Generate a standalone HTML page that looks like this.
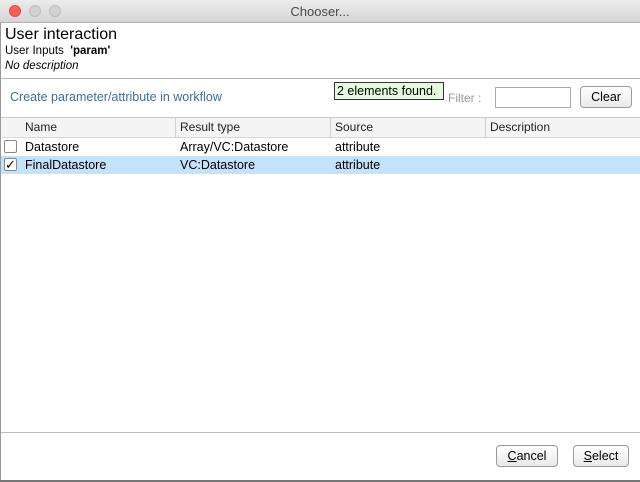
<!DOCTYPE html>
<html><head><style>
*{margin:0;padding:0;box-sizing:border-box}
body{width:640px;height:482px;background:#fff;font-family:"Liberation Sans",sans-serif;font-size:12px;color:#000;position:relative;overflow:hidden}
.abs{position:absolute}
.title{left:0;top:0;width:640px;height:23px;background:linear-gradient(#ececec,#d5d5d5);border-bottom:1px solid #b0b0b0;text-align:center;font-size:13px;line-height:23px;color:#4a4a4a}
.dot{top:5px;width:12px;height:12px;border-radius:50%}
.btn{background:linear-gradient(#fff,#e9e9e9);border:1px solid #9a9a9a;border-radius:4px;text-align:center;font-size:12.5px;line-height:20px}
.hd{top:117px;height:21px;background:#f4f4f4;border-top:1px solid #c8c8c8;border-bottom:1px solid #d8d8d8;line-height:19px;font-size:12px;color:#222;padding-left:4px;border-right:1px solid #d0d0d0}
.cell{height:18px;line-height:18px;font-size:12.5px}
.cb{left:4px;width:13px;height:13px;border:1px solid #888;border-radius:2px;background:#fff}
</style></head><body>
<div class="abs title">Chooser...</div>
<div class="abs dot" style="left:9px;background:#fc5f57;border:1px solid #de4a42"></div>
<div class="abs dot" style="left:29px;background:#d2d2d2;border:1px solid #bcbcbc"></div>
<div class="abs dot" style="left:49px;background:#d2d2d2;border:1px solid #bcbcbc"></div>
<div class="abs" style="left:0;top:23px;width:1px;height:459px;background:#999"></div>
<div class="abs" style="left:5px;top:26px;font-size:16px">User interaction</div>
<div class="abs" style="left:5px;top:45px;font-size:11.5px">User Inputs &nbsp;<b>'param'</b></div>
<div class="abs" style="left:5px;top:60px;font-size:11.5px;font-style:italic">No description</div>
<div class="abs" style="left:1px;top:78px;width:639px;height:1px;background:#b5b5b5"></div>
<div class="abs" style="left:10px;top:90px;color:#3b6fa0;font-size:12.5px">Create parameter/attribute in workflow</div>
<div class="abs" style="left:334px;top:82px;width:110px;height:18px;background:#e4fbe0;border:1px solid #333;font-size:12.5px;line-height:16px;padding-left:2px;white-space:nowrap">2 elements found.</div>
<div class="abs" style="left:448px;top:91px;color:#999;font-size:12px">Filter :</div>
<div class="abs" style="left:495px;top:87px;width:76px;height:21px;border:1px solid #aaa;background:#fff"></div>
<div class="abs btn" style="left:580px;top:86px;width:52px;height:22px">Clear</div>
<div class="abs hd" style="left:1px;width:21px"></div>
<div class="abs hd" style="left:21px;width:155px">Name</div>
<div class="abs hd" style="left:176px;width:155px">Result type</div>
<div class="abs hd" style="left:331px;width:155px">Source</div>
<div class="abs hd" style="left:486px;width:154px;border-right:0">Description</div>
<div class="abs" style="left:1px;top:156px;width:639px;height:18px;background:#c4e2fb"></div>
<div class="abs cb" style="top:140px"></div>
<div class="abs cb" style="top:158px;font-size:13px;line-height:11px;text-align:center">✓</div>
<div class="abs cell" style="left:25px;top:138px">Datastore</div>
<div class="abs cell" style="left:180px;top:138px">Array/VC:Datastore</div>
<div class="abs cell" style="left:335px;top:138px">attribute</div>
<div class="abs cell" style="left:25px;top:156px">FinalDatastore</div>
<div class="abs cell" style="left:180px;top:156px">VC:Datastore</div>
<div class="abs cell" style="left:335px;top:156px">attribute</div>
<div class="abs" style="left:1px;top:432px;width:639px;height:1px;background:#bbb"></div>
<div class="abs btn" style="left:496px;top:445px;width:62px;height:22px"><u>C</u>ancel</div>
<div class="abs btn" style="left:573px;top:445px;width:56px;height:22px"><u>S</u>elect</div>
<div class="abs" style="left:0;top:480px;width:640px;height:2px;background:#777"></div>
</body></html>
